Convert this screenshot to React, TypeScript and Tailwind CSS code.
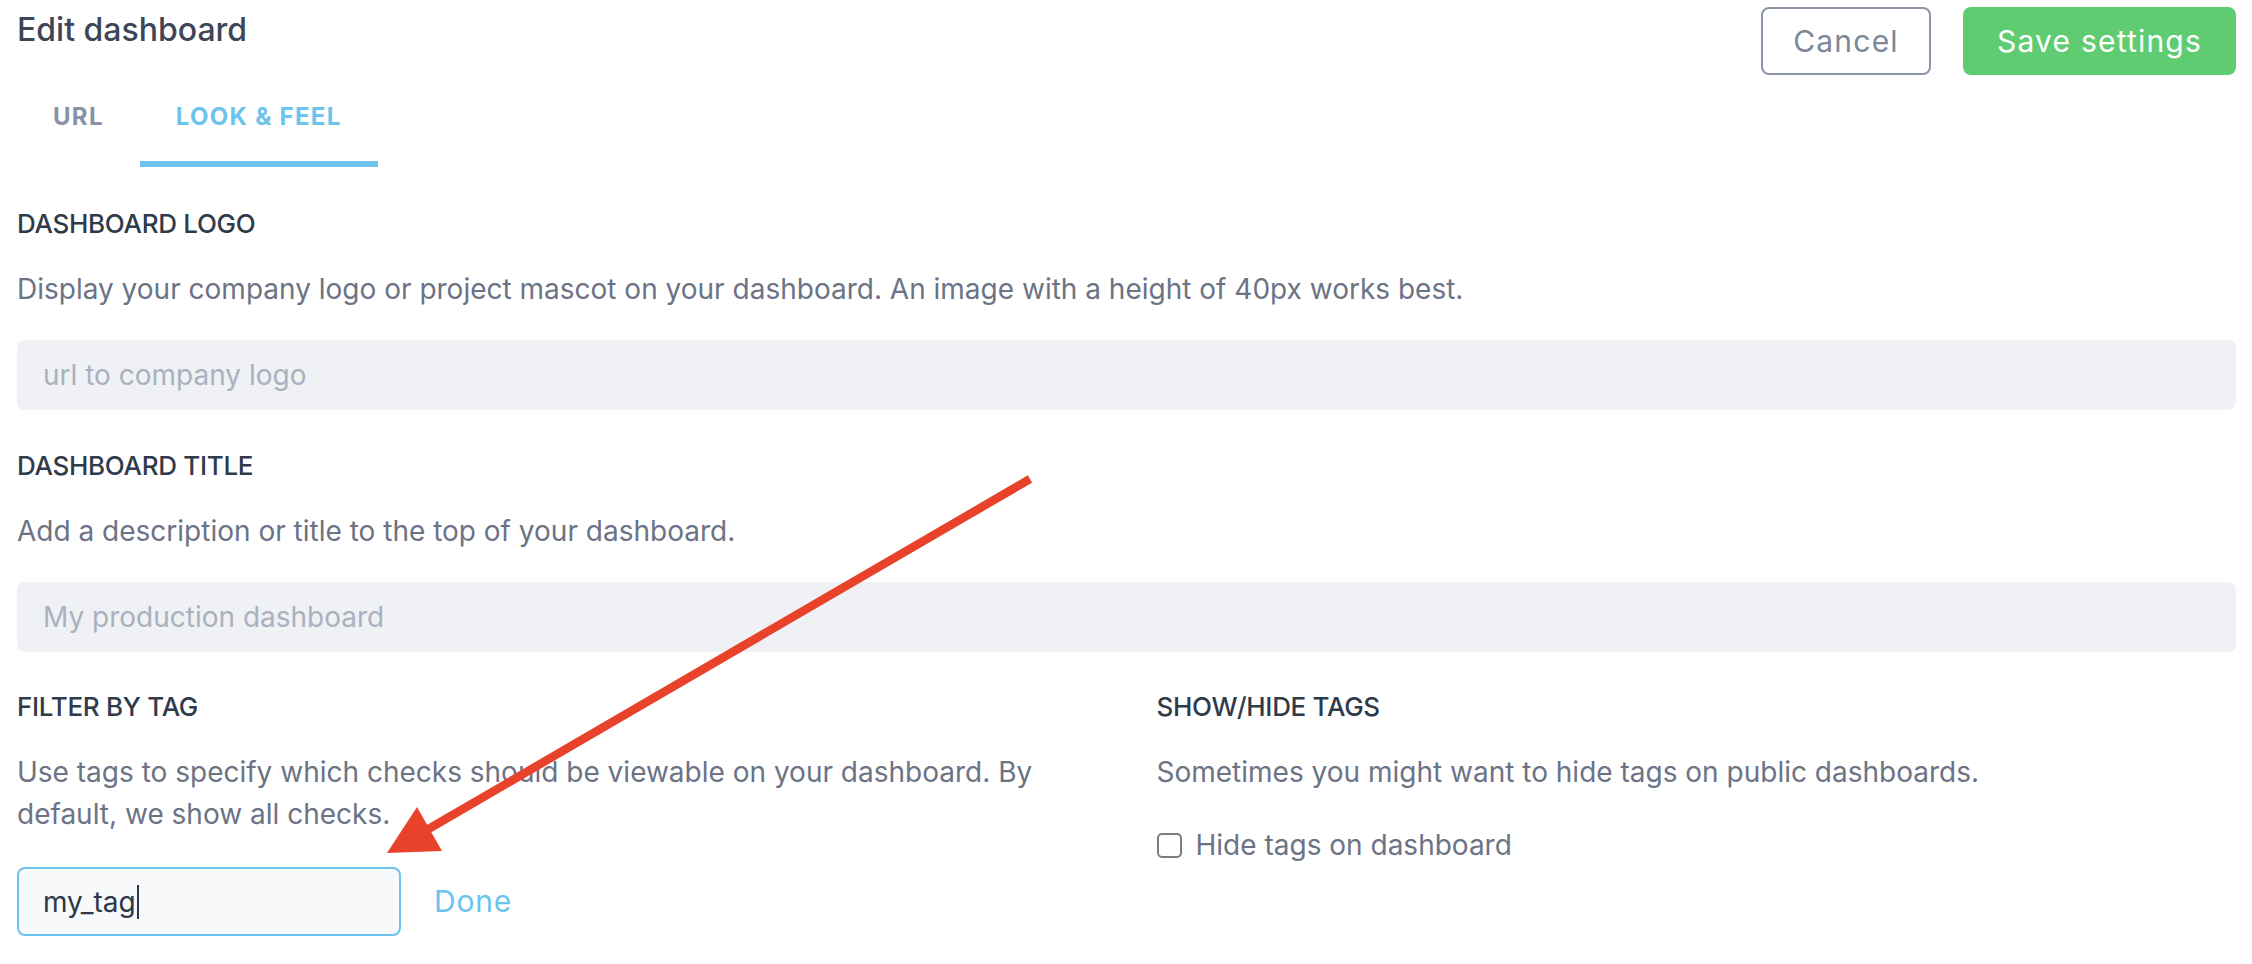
import React from "react";

function Label({ children }: { children: React.ReactNode }) {
  return (
    <div className="text-[26px] leading-[30px] font-medium text-[#2f3a4b] tracking-[-0.3px]">
      {children}
    </div>
  );
}

function Desc({ children }: { children: React.ReactNode }) {
  return <p className="mt-[29px] text-[28px] leading-[43px] text-[#6b7385]">{children}</p>;
}

export default function App() {
  return (
    <div className="relative w-[2252px] h-[964px] overflow-hidden bg-white font-['Inter',sans-serif]">
      <div className="pl-[17px] pr-[16px]">
        {/* Header */}
        <div className="flex items-start justify-between pt-[7px]">
          <h1 className="mt-[3px] text-[32px] leading-[40px] font-medium text-[#3d4657]">Edit dashboard</h1>
          <div className="flex gap-[32px]">
            <button className="h-[68px] w-[170px] rounded-[8px] border-2 border-[#8c96a8] text-[30px] tracking-[1.2px] text-[#7c879a]">
              Cancel
            </button>
            <button className="h-[68px] w-[273px] rounded-[8px] bg-[#5fcc72] text-[30px] tracking-[1.2px] text-white">
              Save settings
            </button>
          </div>
        </div>

        {/* Tabs */}
        <div className="mt-[5px] flex">
          <div className="px-[36px] pt-[22px] pb-[29px] border-b-[6px] border-transparent text-[24px] leading-[30px] font-bold tracking-[1.3px] text-[#8792a6]">
            URL
          </div>
          <div className="px-[36px] pt-[22px] pb-[29px] border-b-[6px] border-[#6cc3ec] text-[24px] leading-[30px] font-bold tracking-[1.3px] text-[#6cc3ec]">
            LOOK &amp; FEEL
          </div>
        </div>

        {/* Dashboard logo */}
        <div className="mt-[42px]">
          <Label>DASHBOARD LOGO</Label>
          <Desc>
            Display your company logo or project mascot on your dashboard. An image with a height of 40px works best.
          </Desc>
          <div className="mt-[29px] h-[70px] rounded-[8px] bg-[#f0f1f5] flex items-center pl-[26px] text-[28px] text-[#a9b1bf]">
            url to company logo
          </div>
        </div>

        {/* Dashboard title */}
        <div className="mt-[41px]">
          <Label>DASHBOARD TITLE</Label>
          <Desc>Add a description or title to the top of your dashboard.</Desc>
          <div className="mt-[29px] h-[70px] rounded-[8px] bg-[#f0f1f5] flex items-center pl-[26px] text-[28px] text-[#a9b1bf]">
            My production dashboard
          </div>
        </div>

        {/* Tags */}
        <div className="mt-[40px] grid grid-cols-2 gap-x-[60px]">
          <div>
            <Label>FILTER BY TAG</Label>
            <p className="mt-[29px] text-[28px] leading-[42px] text-[#6b7385]">
              Use tags to specify which checks should be viewable on your dashboard. By default, we show all checks.
            </p>
            <div className="mt-[32px] flex items-center">
              <div className="h-[69px] w-[384px] rounded-[8px] border-2 border-[#6cc3ec] bg-[#f7f9fb] flex items-center pl-[24px] text-[28px] text-[#2d3748]">
                <span>my_tag</span>
                <span className="ml-[1px] inline-block h-[34px] w-[2px] bg-[#2d3748]" />
              </div>
              <span className="ml-[33px] text-[30px] tracking-[0.8px] text-[#6cc3ec]">Done</span>
            </div>
          </div>
          <div>
            <Label>SHOW/HIDE TAGS</Label>
            <p className="mt-[29px] text-[28px] leading-[42px] text-[#6b7385]">
              Sometimes you might want to hide tags on public dashboards.
            </p>
            <div className="mt-[31px] flex items-center h-[42px]">
              <span className="inline-block h-[25px] w-[25px] rounded-[5px] border-2 border-[#7d7d7d] bg-white" />
              <span className="ml-[14px] text-[28px] text-[#6b7385]">Hide tags on dashboard</span>
            </div>
          </div>
        </div>
      </div>

      {/* Annotation arrow */}
      <svg className="absolute inset-0 pointer-events-none" width="2252" height="964" viewBox="0 0 2252 964">
        <line x1="1030" y1="479" x2="425" y2="831" stroke="#e8432a" strokeWidth="8.5" />
        <polygon points="387,853 417,807 442,851" fill="#e8432a" />
      </svg>
    </div>
  );
}
